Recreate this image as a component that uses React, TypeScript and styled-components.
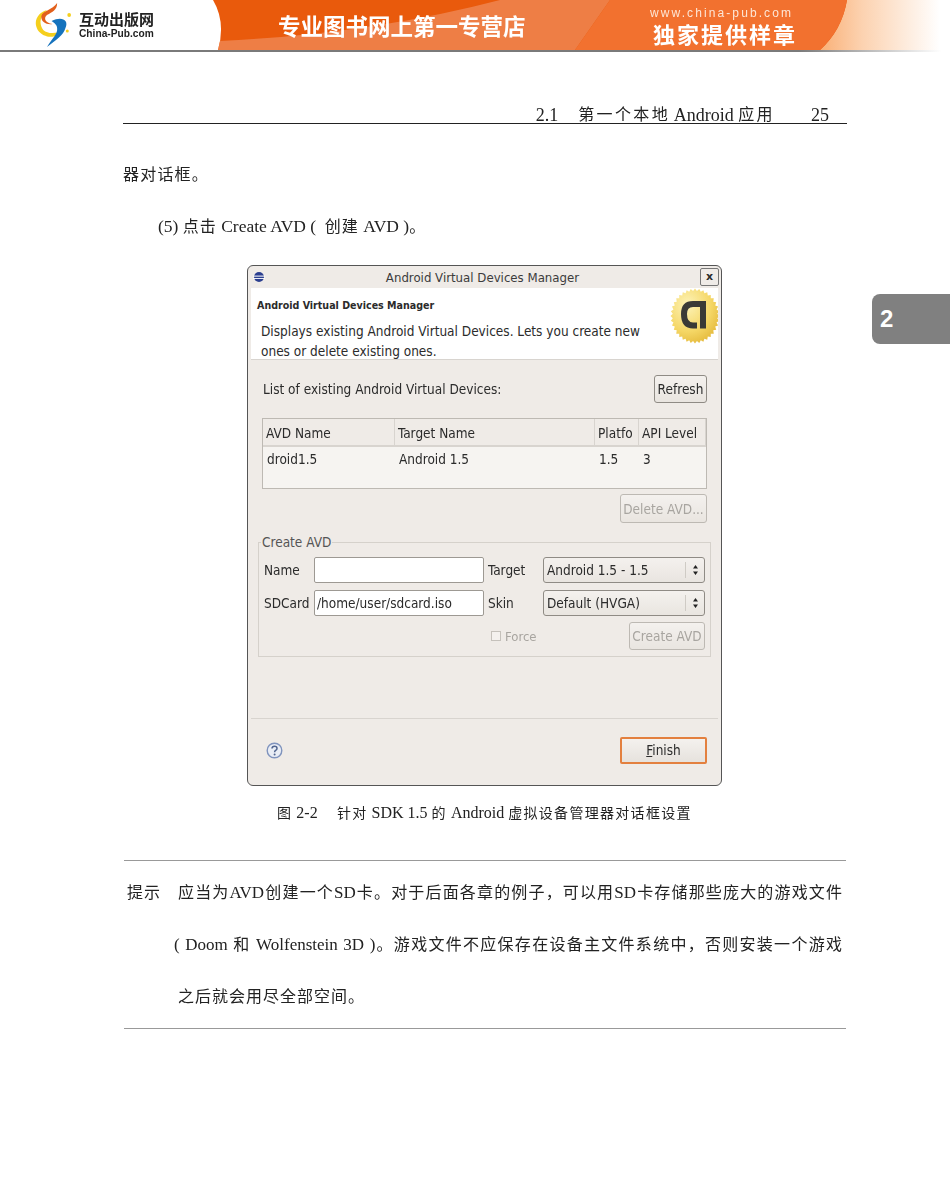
import styled, { createGlobalStyle } from 'styled-components';

const serifCjk = `"Liberation Serif", "Noto Sans CJK SC", serif`;
const uiFont = `"DejaVu Sans Condensed", "DejaVu Sans", "Noto Sans", sans-serif`;

const GlobalStyle = createGlobalStyle`
  html, body {
    margin: 0;
    padding: 0;
    background: #fff;
    color: #222;
    font-family: ${serifCjk};
  }
`;

function BannerArt() {
  return (
    <BannerSvg viewBox="0 0 950 50" preserveAspectRatio="none">
      <defs>
        <linearGradient id="fade" x1="0" x2="1" y1="0" y2="0">
          <stop offset="0" stopColor="#f9a869" />
          <stop offset="0.4" stopColor="#fcd2b0" />
          <stop offset="1" stopColor="#ffffff" />
        </linearGradient>
      </defs>
      <rect x="810" width="130" height="50" fill="url(#fade)" />
      <path d="M213 0 Q226 22 218 50 L820 50 Q842 30 847 0 Z" fill="#e95a0c" />
      <path d="M218 50 L220 41 Q370 34 500 0 L610 0 L575 50 Z" fill="#ef8550" opacity="0.85" />
      <path d="M610 0 L847 0 Q842 30 820 50 L575 50 Z" fill="#f2712f" />
    </BannerSvg>
  );
}

function Logo() {
  return (
    <svg width="37" height="46" viewBox="0 2 40 46" preserveAspectRatio="none">
      <path d="M4 30 C-2 20 6 12 14 10 C8 16 4 22 10 30 C16 35 26 33 33 30 C26 38 12 40 4 30 Z" fill="#f5cf1d" />
      <circle cx="38" cy="15" r="2" fill="#f5cf1d" />
      <circle cx="36" cy="31" r="1.6" fill="#f5cf1d" />
      <path d="M25 3 C25 10 20 12 14 15 C10 18 12 23 20 24 C14 25 7 22 8 16 C9 11 20 10 25 3 Z" fill="#e2601c" />
      <path d="M19 21 C30 16 38 20 34 28 C32 35 24 40 14 47 C19 39 26 34 25 28 C25 25 22 23 19 21 Z" fill="#1673bd" />
    </svg>
  );
}

function Seal() {
  const points: string[] = [];
  for (let i = 0; i < 72; i++) {
    const k = i % 2 === 0 ? 1 : 0.91;
    const a = (i / 72) * Math.PI * 2;
    points.push(`${25 + 24.5 * k * Math.cos(a)},${28 + 27.5 * k * Math.sin(a)}`);
  }
  return (
    <svg width="48" height="56" viewBox="0 0 48 56">
      <defs>
        <radialGradient id="gold" cx="0.35" cy="0.3" r="0.8">
          <stop offset="0" stopColor="#fdf3b8" />
          <stop offset="0.6" stopColor="#f5d766" />
          <stop offset="1" stopColor="#e2b535" />
        </radialGradient>
      </defs>
      <polygon points={points.join(' ')} fill="url(#gold)" />
      <path
        d="M33 40.5 V16 H23 Q14 16 14 26 Q14 37.5 23 37.5 H27"
        fill="none"
        stroke="#3a3a36"
        strokeWidth="6"
      />
    </svg>
  );
}

function EclipseIcon() {
  return (
    <svg width="12" height="12" viewBox="0 0 12 12">
      <circle cx="6" cy="6" r="5" fill="#2c3f8f" />
      <rect x="0" y="4.6" width="12" height="1" fill="#fff" />
      <rect x="0" y="7" width="12" height="0.9" fill="#fff" />
    </svg>
  );
}

function HelpIcon() {
  return (
    <svg width="17" height="17" viewBox="0 0 17 17">
      <circle cx="8.5" cy="8.5" r="7.3" fill="#e9edf5" stroke="#7f93bd" strokeWidth="1.4" />
      <path d="M6 6.6 Q6 4.3 8.5 4.3 Q11 4.3 11 6.4 Q11 7.6 9.6 8.4 Q8.6 9 8.6 10.3" fill="none" stroke="#50648f" strokeWidth="1.5" />
      <circle cx="8.6" cy="12.6" r="1" fill="#50648f" />
    </svg>
  );
}

function SpinnerArrows() {
  return (
    <svg width="7" height="12" viewBox="0 0 7 12">
      <path d="M3.5 1 L6 4.4 H1 Z M3.5 11 L6 7.6 H1 Z" fill="#222" />
    </svg>
  );
}

export default function App() {
  return (
    <Page>
      <GlobalStyle />
      <Banner>
        <BannerArt />
        <LogoBlock>
          <Logo />
          <LogoText>
            <LogoName>互动出版网</LogoName>
            <LogoUrl>China-Pub.com</LogoUrl>
          </LogoText>
        </LogoBlock>
        <Slogan>专业图书网上第一专营店</Slogan>
        <BannerRight>
          <SiteUrl>www.china-pub.com</SiteUrl>
          <Exclusive>独家提供样章</Exclusive>
        </BannerRight>
      </Banner>

      <ChapterTab>2</ChapterTab>

      <Content>
        <RunningHead>
          <HeadNumber>2.1</HeadNumber>
          第一个本地<Lat $s={18}> Android </Lat>应用
          <PageNo>25</PageNo>
        </RunningHead>

        <BodyText>器对话框。</BodyText>
        <StepText>
          <Lat $s={17.5}>(5) </Lat>点击<Lat $s={17.5}> Create AVD (  </Lat>创建<Lat $s={17.5}> AVD )</Lat>。
        </StepText>

        <Dialog>
          <TitleBar>
            <EclipseIcon />
            <TitleText>Android Virtual Devices Manager</TitleText>
            <CloseButton>x</CloseButton>
          </TitleBar>
          <HeaderPanel>
            <HeaderText>
              <HeaderTitle>Android Virtual Devices Manager</HeaderTitle>
              <HeaderDesc>
                Displays existing Android Virtual Devices. Lets you create new
                <br />
                ones or delete existing ones.
              </HeaderDesc>
            </HeaderText>
            <SealSlot>
              <Seal />
            </SealSlot>
          </HeaderPanel>

          <ListSection>
            <ListHead>
              <span>List of existing Android Virtual Devices:</span>
              <DlgButton $w={53} $h={28}>Refresh</DlgButton>
            </ListHead>
            <Table>
              <TableHead>
                <HeadCell>AVD Name</HeadCell>
                <HeadCell>Target Name</HeadCell>
                <HeadCell>Platfo</HeadCell>
                <HeadCell>API Level</HeadCell>
              </TableHead>
              <TableRow>
                <RowCell>droid1.5</RowCell>
                <RowCell>Android 1.5</RowCell>
                <RowCell>1.5</RowCell>
                <RowCell>3</RowCell>
              </TableRow>
            </Table>
            <DeleteRow>
              <DlgButton $w={87} $h={29} $disabled>Delete AVD...</DlgButton>
            </DeleteRow>
          </ListSection>

          <Group>
            <Legend>Create AVD</Legend>
            <FormGrid>
              <FieldLabel>Name</FieldLabel>
              <Field />
              <FieldLabel>Target</FieldLabel>
              <Select>
                <span>Android 1.5 - 1.5</span>
                <SelectArrow><SpinnerArrows /></SelectArrow>
              </Select>
              <FieldLabel>SDCard</FieldLabel>
              <Field>/home/user/sdcard.iso</Field>
              <FieldLabel>Skin</FieldLabel>
              <Select>
                <span>Default (HVGA)</span>
                <SelectArrow><SpinnerArrows /></SelectArrow>
              </Select>
            </FormGrid>
            <ForceRow>
              <ForceLabel>
                <CheckBox />
                Force
              </ForceLabel>
              <DlgButton $w={76} $h={28} $disabled>Create AVD</DlgButton>
            </ForceRow>
          </Group>

          <Footer>
            <HelpIcon />
            <FinishButton>
              <u>F</u>inish
            </FinishButton>
          </Footer>
        </Dialog>

        <Caption>
          图<Lat $s={16}> 2-2 </Lat>　针对<Lat $s={16}> SDK 1.5 </Lat>的<Lat $s={16}> Android </Lat>虚拟设备管理器对话框设置
        </Caption>

        <Note>
          <NoteLabel>提示</NoteLabel>
          <NoteBody>
            <NoteLine>
              应当为<Lat $s={17}>AVD</Lat>创建一个<Lat $s={17}>SD</Lat>卡。对于后面各章的例子，可以用<Lat $s={17}>SD</Lat>卡存储那些庞大的游戏文件
            </NoteLine>
            <NoteLine $indent>
              <Lat $s={17}>( Doom </Lat>和<Lat $s={17}> Wolfenstein 3D )</Lat>。游戏文件不应保存在设备主文件系统中，否则安装一个游戏
            </NoteLine>
            <NoteLine $last>之后就会用尽全部空间。</NoteLine>
          </NoteBody>
        </Note>
      </Content>
    </Page>
  );
}

const Page = styled.div`
  position: relative;
  width: 950px;
  height: 1187px;
  overflow: hidden;
  filter: blur(0.35px);
`;

const Lat = styled.span<{ $s: number }>`
  font-size: ${(p) => p.$s}px;
  letter-spacing: 0;
  white-space: pre;
`;

const Banner = styled.header`
  position: relative;
  height: 50px;
  display: flex;
  align-items: center;
  border-bottom: 2px solid #808080;
  border-image: linear-gradient(90deg, #7a7a7a 84%, #ffffff 99%) 1;
  filter: blur(0.3px);
`;

const BannerSvg = styled.svg`
  position: absolute;
  inset: 0;
  width: 950px;
  height: 50px;
`;

const LogoBlock = styled.div`
  position: relative;
  display: flex;
  align-items: center;
  gap: 8px;
  width: 278px;
  padding-left: 34px;
  box-sizing: border-box;
`;

const LogoText = styled.div`
  display: flex;
  flex-direction: column;
  font-family: "Liberation Sans", "Noto Sans CJK SC", sans-serif;
  font-weight: 700;
  color: #222;
`;

const LogoName = styled.div`
  font-size: 15px;
  line-height: 16px;
`;

const LogoUrl = styled.div`
  font-size: 10.2px;
  line-height: 11px;
`;

const Slogan = styled.div`
  position: relative;
  width: 372px;
  font-family: "Noto Sans CJK SC", sans-serif;
  font-size: 22.5px;
  font-weight: 700;
  color: #fff;
  white-space: nowrap;
`;

const BannerRight = styled.div`
  position: relative;
  display: flex;
  flex-direction: column;
  align-items: flex-start;
  color: #fff;
`;

const SiteUrl = styled.div`
  font-family: "Liberation Sans", sans-serif;
  font-size: 12px;
  line-height: 16px;
  letter-spacing: 2.1px;
  color: #fde6d6;
`;

const Exclusive = styled.div`
  margin-left: 3px;
  font-family: "Noto Sans CJK SC", serif;
  font-size: 22px;
  line-height: 24px;
  font-weight: 700;
  letter-spacing: 2px;
`;

const ChapterTab = styled.div`
  position: absolute;
  top: 294px;
  right: 0;
  width: 78px;
  height: 50px;
  box-sizing: border-box;
  padding-left: 8px;
  background: #808080;
  border-radius: 8px 0 0 8px;
  color: #fff;
  font: 700 24px/50px "Liberation Sans", sans-serif;
`;

const Content = styled.main`
  padding: 0 103px 0 123px;
`;

const RunningHead = styled.div`
  display: flex;
  justify-content: flex-end;
  white-space: pre;
  margin-top: 52px;
  padding-right: 18px;
  height: 19px;
  border-bottom: 1px solid #222;
  font-size: 16px;
  letter-spacing: 2.4px;
  line-height: 22px;
`;

const HeadNumber = styled.span`
  margin-right: 20px;
  font-size: 18px;
  letter-spacing: 0;
`;

const PageNo = styled.span`
  margin-left: 36px;
  font-size: 18px;
  letter-spacing: 0;
`;

const BodyText = styled.p`
  margin: 40px 0 0;
  font-size: 16px;
  letter-spacing: 1.2px;
  line-height: 22px;
`;

const StepText = styled(BodyText)`
  margin: 29px 0 0;
  padding-left: 35px;
  letter-spacing: 1px;
`;

const Dialog = styled.section`
  display: flex;
  flex-direction: column;
  box-sizing: border-box;
  width: 475px;
  height: 521px;
  margin: 27px 0 0 124px;
  padding: 0 3px;
  border: 1px solid #555;
  border-radius: 6px;
  background: #efebe7;
  font-family: ${uiFont};
  font-size: 13.5px;
  color: #2b2b2b;
  filter: blur(0.3px);
`;

const TitleBar = styled.div`
  display: flex;
  align-items: center;
  height: 22px;
  flex: none;
  padding-left: 2px;
`;

const TitleText = styled.div`
  flex: 1;
  text-align: center;
  font-size: 13.1px;
  color: #3c3c3c;
`;

const CloseButton = styled.div`
  width: 17px;
  height: 16px;
  margin-right: -1px;
  border: 1px solid #777;
  border-radius: 2px;
  font: 700 11px/15px "DejaVu Sans", sans-serif;
  text-align: center;
`;

const HeaderPanel = styled.div`
  display: flex;
  flex: none;
  justify-content: space-between;
  height: 72px;
  box-sizing: border-box;
  background: #fff;
  border-bottom: 1px solid #d8d4cf;
  overflow: hidden;
`;

const HeaderText = styled.div`
  padding: 9px 0 0 6px;
`;

const HeaderTitle = styled.div`
  font-size: 10.6px;
  font-weight: 700;
  line-height: 16px;
`;

const HeaderDesc = styled.div`
  margin: 8px 0 0 4px;
  font-size: 13.5px;
  line-height: 20px;
`;

const SealSlot = styled.div`
  flex: none;
`;

const ListSection = styled.div`
  flex: none;
  padding: 15px 11px 0 12px;
`;

const ListHead = styled.div`
  display: flex;
  align-items: center;
  justify-content: space-between;
`;

const DlgButton = styled.div<{ $w: number; $h: number; $disabled?: boolean }>`
  display: flex;
  align-items: center;
  justify-content: center;
  box-sizing: border-box;
  width: ${(p) => p.$w}px;
  height: ${(p) => p.$h}px;
  border: 1px solid ${(p) => (p.$disabled ? '#bdb9b3' : '#8f8b85')};
  border-radius: 3px;
  background: linear-gradient(#f4f1ee, #e9e5e0);
  color: ${(p) => (p.$disabled ? '#a8a5a0' : '#2b2b2b')};
  white-space: nowrap;
`;

const Table = styled.div`
  margin: 15px 0 0 -1px;
  height: 71px;
  box-sizing: border-box;
  border: 1px solid #bdb9b3;
  background: #f6f4f1;
`;

const tableColumns = `132px 200px 44px 67px`;

const TableHead = styled.div`
  display: grid;
  grid-template-columns: ${tableColumns};
  height: 28px;
  box-sizing: border-box;
  background: #efebe7;
  border-bottom: 2px solid #d8d4cf;
`;

const HeadCell = styled.div`
  padding-left: 3px;
  line-height: 28px;
  border-right: 1px solid #d8d4cf;
`;

const TableRow = styled.div`
  display: grid;
  grid-template-columns: ${tableColumns};
  height: 27px;
`;

const RowCell = styled.div`
  padding-left: 4px;
  line-height: 25px;
`;

const DeleteRow = styled.div`
  display: flex;
  justify-content: flex-end;
  margin-top: 5px;
`;

const Group = styled.fieldset`
  position: relative;
  flex: none;
  box-sizing: border-box;
  width: 453px;
  height: 115px;
  margin: 19px 0 0 7px;
  padding: 14px 5px 0;
  border: 1px solid #d5d1cb;
`;

const Legend = styled.div`
  position: absolute;
  top: -9px;
  left: 2px;
  padding: 0 1px;
  background: #efebe7;
  color: #555;
  line-height: 17px;
`;

const FormGrid = styled.div`
  display: grid;
  grid-template-columns: 50px 170px 59px 162px;
  grid-auto-rows: 26px;
  row-gap: 7px;
  align-items: center;
`;

const FieldLabel = styled.div`
  white-space: nowrap;

  &:nth-child(4n + 3) {
    padding-left: 4px;
  }
`;

const Field = styled.div`
  height: 26px;
  box-sizing: border-box;
  padding-left: 2px;
  border: 1px solid #9d9993;
  border-radius: 2px;
  background: #fff;
  line-height: 24px;
`;

const Select = styled.div`
  display: flex;
  align-items: center;
  justify-content: space-between;
  height: 26px;
  box-sizing: border-box;
  padding-left: 3px;
  border: 1px solid #8f8b85;
  border-radius: 3px;
  background: linear-gradient(#f4f1ee, #e9e5e0);
`;

const SelectArrow = styled.span`
  display: flex;
  align-items: center;
  justify-content: center;
  width: 18px;
  height: 16px;
  border-left: 1px solid #cfcbc5;
`;

const ForceRow = styled.div`
  display: flex;
  align-items: center;
  justify-content: space-between;
  margin: 6px 0 0 227px;
`;

const ForceLabel = styled.div`
  display: flex;
  align-items: center;
  gap: 4px;
  color: #a8a5a0;
  font-size: 13px;
`;

const CheckBox = styled.span`
  width: 8px;
  height: 8px;
  border: 1px solid #c5c1bb;
  background: #f4f1ee;
`;

const Footer = styled.div`
  display: flex;
  align-items: center;
  justify-content: space-between;
  margin-top: 61px;
  height: 67px;
  flex: none;
  box-sizing: border-box;
  padding: 0 11px 4px 15px;
  border-top: 1px solid #d8d4cf;
`;

const FinishButton = styled.div`
  width: 87px;
  height: 27px;
  box-sizing: border-box;
  border: 2px solid #e3803f;
  border-radius: 2px;
  background: linear-gradient(#f4f1ee, #e6e2dd);
  text-align: center;
  line-height: 23px;
`;

const Caption = styled.div`
  margin-top: 17px;
  padding-left: 154px;
  font-size: 14px;
  letter-spacing: 1.3px;
  line-height: 20px;
  white-space: nowrap;
`;

const Note = styled.section`
  display: flex;
  width: 722px;
  height: 169px;
  box-sizing: border-box;
  margin: 36px 0 0 1px;
  padding: 6px 4px 0 3px;
  border-top: 1px solid #999;
  border-bottom: 1px solid #999;
  font-size: 16px;
  line-height: 52px;
`;

const NoteLabel = styled.div`
  width: 51px;
  flex: none;
  letter-spacing: 1px;
`;

const NoteBody = styled.div`
  flex: 1;
  min-width: 0;
`;

const NoteLine = styled.div<{ $indent?: boolean; $last?: boolean }>`
  white-space: nowrap;
  text-align: ${(p) => (p.$last ? 'left' : 'justify')};
  text-align-last: ${(p) => (p.$last ? 'left' : 'justify')};
  letter-spacing: ${(p) => (p.$last ? '1px' : '0')};
  margin-left: ${(p) => (p.$indent ? '-4px' : '0')};
`;
